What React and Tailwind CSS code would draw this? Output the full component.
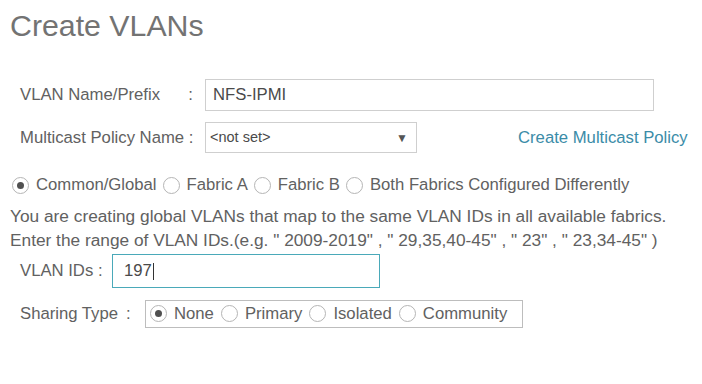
import React from 'react';

function Radio({ checked }) {
  return (
    <span className="flex items-center justify-center w-[17px] h-[17px] rounded-full border border-[#b5b5b5] bg-white shrink-0">
      {checked && <span className="w-[7px] h-[7px] rounded-full bg-[#505050]" />}
    </span>
  );
}

function RadioOption({ label, checked, gap = 'mr-[6px]' }) {
  return (
    <label className={`flex items-center whitespace-nowrap ${gap}`}>
      <Radio checked={checked} />
      <span className="ml-[7px]">{label}</span>
    </label>
  );
}

export default function App() {
  const fabrics = [
    { label: 'Common/Global', checked: true },
    { label: 'Fabric A' },
    { label: 'Fabric B' },
    { label: 'Both Fabrics Configured Differently' },
  ];
  const sharing = [
    { label: 'None', checked: true },
    { label: 'Primary' },
    { label: 'Isolated' },
    { label: 'Community' },
  ];

  return (
    <div
      className="w-[702px] h-[384px] bg-white text-[#616161] text-[16.7px] overflow-hidden"
      style={{ fontFamily: '"Liberation Sans", Arial, sans-serif' }}
    >
      <h1 className="pl-[10px] pt-[8px] h-[44px] text-[30.3px] leading-[36px] text-[#737373]">
        Create VLANs
      </h1>

      {/* VLAN name */}
      <div className="flex items-center mt-[35px] h-[32px]">
        <div className="flex justify-between w-[173px] ml-[20px] shrink-0">
          <span>VLAN Name/Prefix</span>
          <span>:</span>
        </div>
        <div className="ml-[12px] w-[449px] h-[32px] border border-[#cfcfcf] flex items-center pl-[7px] text-[#4a4a4a]">
          NFS-IPMI
        </div>
      </div>

      {/* Multicast policy */}
      <div className="flex items-center mt-[11px] h-[31px] whitespace-nowrap">
        <div className="w-[173px] ml-[20px] shrink-0">Multicast Policy Name :</div>
        <div className="ml-[12px] w-[212px] h-[31px] shrink-0 border border-[#cfcfcf] flex items-center justify-between pl-[4px] pr-[8px] text-[14.5px] text-[#4a4a4a]">
          <span>&lt;not set&gt;</span>
          <span className="text-[12px] text-[#555]">▼</span>
        </div>
        <a className="ml-[101px] text-[#3b8ca8]">Create Multicast Policy</a>
      </div>

      {/* Fabric radios */}
      <div className="flex items-center mt-[20px] h-[24px] pl-[12px]">
        {fabrics.map((f) => (
          <RadioOption key={f.label} label={f.label} checked={f.checked} />
        ))}
      </div>

      <p className="mt-[7px] pl-[10px] leading-[24px] text-[17.3px] whitespace-nowrap">
        You are creating global VLANs that map to the same VLAN IDs in all available fabrics.
        <br />
        Enter the range of VLAN IDs.(e.g. " 2009-2019" , " 29,35,40-45" , " 23" , " 23,34-45" )
      </p>

      {/* VLAN IDs */}
      <div className="flex items-center mt-[2px] h-[34px]">
        <span className="ml-[20px] w-[92px] shrink-0">VLAN IDs :</span>
        <div className="w-[268px] h-[34px] border border-[#4aa9b9] flex items-center pl-[11px] text-[#4a4a4a]">
          197<span className="inline-block w-[1px] h-[17px] bg-[#333] ml-[1px]" />
        </div>
      </div>

      {/* Sharing type */}
      <div className="flex items-center mt-[12px] h-[28px]">
        <div className="flex w-[115px] ml-[20px] shrink-0 whitespace-nowrap">
          <span>Sharing Type</span>
          <span className="ml-[8px]">:</span>
        </div>
        <div className="ml-[10px] w-[378px] h-[28px] border border-[#bdbdbd] flex items-center pl-[4px]">
          {sharing.map((s) => (
            <RadioOption key={s.label} label={s.label} checked={s.checked} gap="mr-[7px]" />
          ))}
        </div>
      </div>
    </div>
  );
}
